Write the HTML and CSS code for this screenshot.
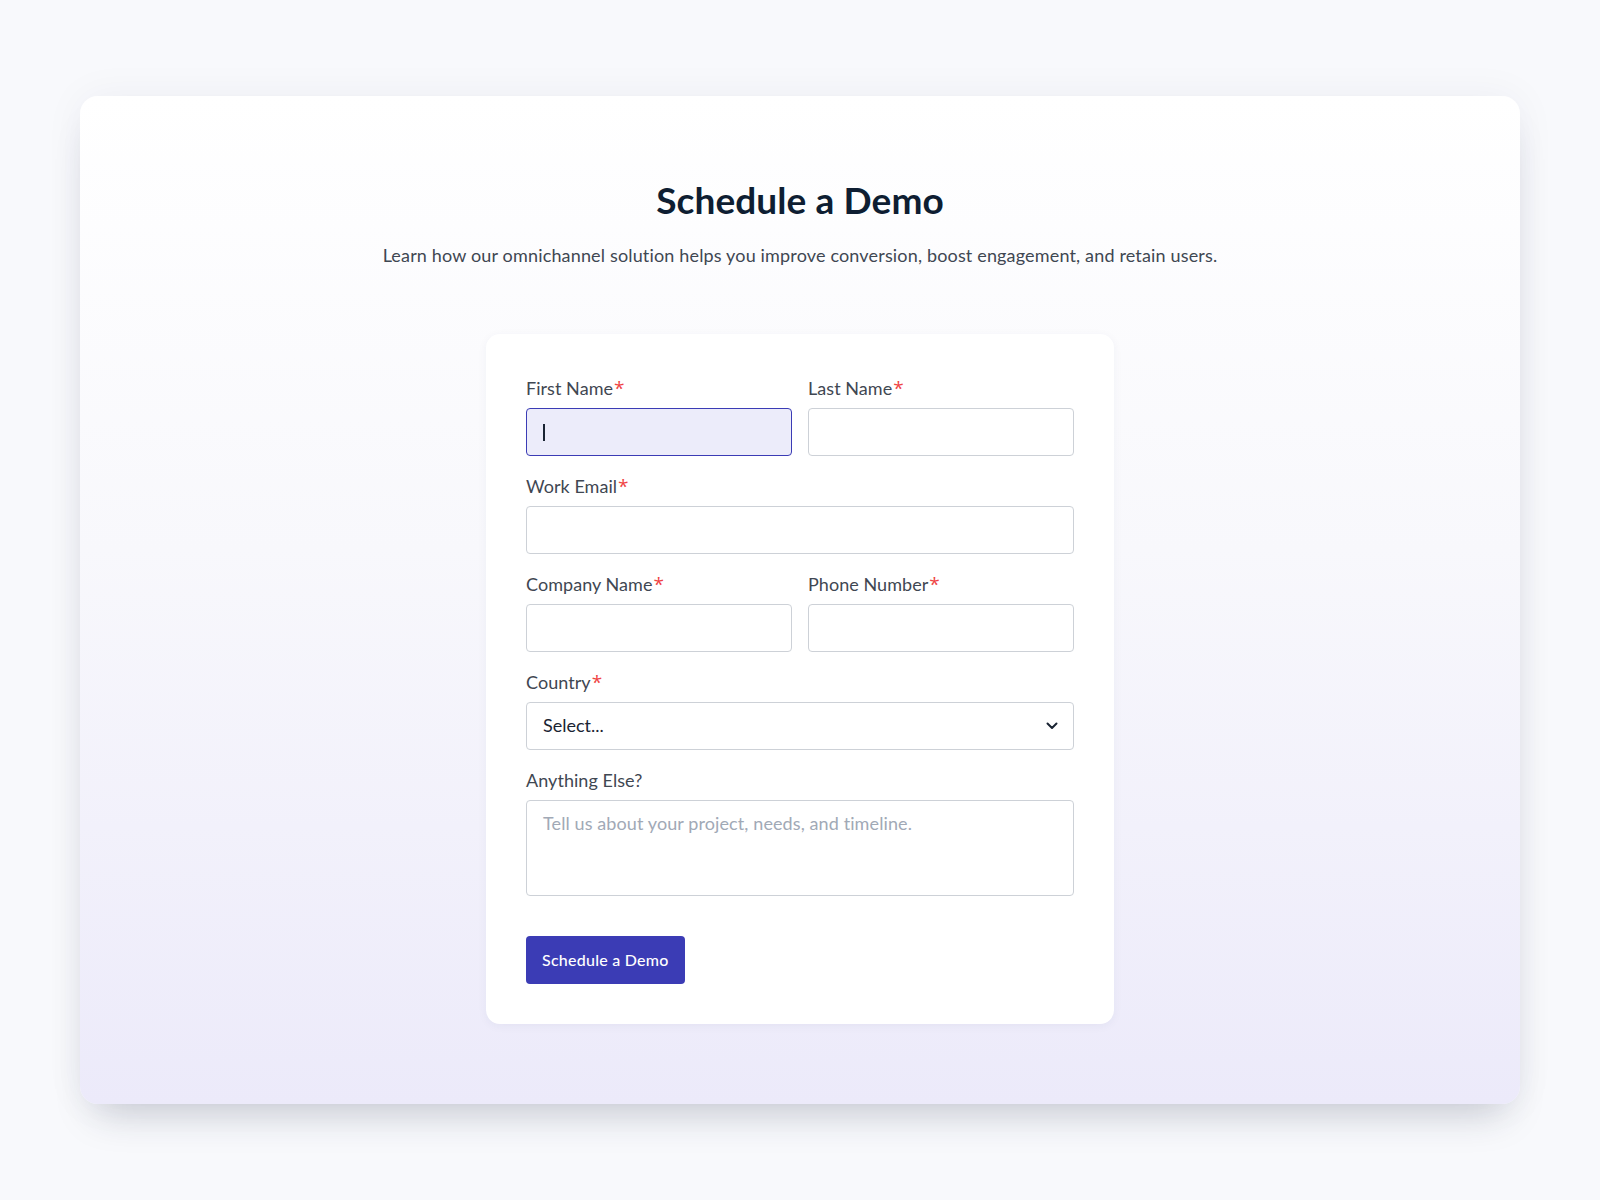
FILE: index.html
```html
<!DOCTYPE html>
<html lang="en">
<head>
<meta charset="utf-8">
<title>Schedule a Demo</title>
<link rel="stylesheet" href="styles.css">
</head>
<body>
<main class="page">
  <section class="hero">
    <h1 class="title">Schedule a Demo</h1>
    <p class="subtitle">Learn how our omnichannel solution helps you improve conversion, boost engagement, and retain users.</p>
    <form class="form-card">
      <div class="row two">
        <div class="field">
          <label class="label">First Name<span class="req">*</span></label>
          <div class="input focused"><span class="caret"></span></div>
        </div>
        <div class="field">
          <label class="label">Last Name<span class="req">*</span></label>
          <div class="input"></div>
        </div>
      </div>
      <div class="row">
        <div class="field">
          <label class="label">Work Email<span class="req">*</span></label>
          <div class="input"></div>
        </div>
      </div>
      <div class="row two">
        <div class="field">
          <label class="label">Company Name<span class="req">*</span></label>
          <div class="input"></div>
        </div>
        <div class="field">
          <label class="label">Phone Number<span class="req">*</span></label>
          <div class="input"></div>
        </div>
      </div>
      <div class="row">
        <div class="field">
          <label class="label">Country<span class="req">*</span></label>
          <div class="input select">
            <span class="select-text">Select...</span>
            <svg class="chevron" width="12" height="8" viewBox="0 0 12 8" fill="none"><path d="M1.5 1.5 6 6l4.5-4.5" stroke="#1a2433" stroke-width="2" stroke-linecap="round" stroke-linejoin="round"/></svg>
          </div>
        </div>
      </div>
      <div class="row">
        <div class="field">
          <label class="label">Anything Else?</label>
          <div class="input textarea"><span class="placeholder">Tell us about your project, needs, and timeline.</span></div>
        </div>
      </div>
      <div class="actions">
        <button type="button" class="btn">Schedule a Demo</button>
      </div>
    </form>
  </section>
</main>
</body>
</html>
```
FILE: styles.css
```css
* { box-sizing: border-box; }
html, body { margin: 0; padding: 0; }
body {
  background: #f8f9fc;
  font-family: "Lato", "Open Sans", sans-serif;
  color: #3f4752;
}
.page {
  padding: 96px 80px 96px;
}
.hero {
  background: linear-gradient(180deg, #ffffff 0%, #f8f8fc 45%, #eceafa 100%);
  border-radius: 18px;
  box-shadow: 0 24px 40px -16px rgba(30, 40, 70, 0.22), 0 0 40px rgba(30, 40, 80, 0.05);
  padding: 80px 0 80px;
  display: flex;
  flex-direction: column;
  align-items: center;
}
.title {
  margin: 0;
  font-size: 37px;
  line-height: 48px;
  font-weight: 700;
  color: #0e1e32;
  letter-spacing: 0.1px;
}
.subtitle {
  margin: 17px 0 0;
  font-size: 18px;
  line-height: 28px;
  color: #3f4752;
  letter-spacing: 0.16px;
}
.form-card {
  margin-top: 65px;
  width: 628px;
  background: #ffffff;
  border-radius: 14px;
  box-shadow: 0 2px 10px rgba(40, 50, 90, 0.05);
  padding: 40px;
  display: flex;
  flex-direction: column;
  gap: 16px;
}
.row { display: flex; gap: 16px; }
.row .field { flex: 1; min-width: 0; }
.field { display: flex; flex-direction: column; gap: 6px; }
.label {
  font-size: 18px;
  line-height: 28px;
  color: #3f4752;
  letter-spacing: 0.05px;
}
.req {
  color: #ef4444;
  font-family: "Open Sans", sans-serif;
  font-size: 19px;
  margin-left: 1px;
}
.input {
  height: 48px;
  border: 1px solid #cdd1d7;
  border-radius: 4px;
  background: #fff;
  display: flex;
  align-items: center;
  padding: 0 16px;
}
.input.focused {
  background: #ececfa;
  border-color: #3b3cb5;
}
.caret {
  display: block;
  width: 2px;
  height: 17px;
  background: #1a2433;
}
.select { justify-content: space-between; padding-right: 15px; }
.select-text { font-size: 18px; color: #1a2433; line-height: 24px; margin-top: -2px; }
.chevron { display: block; }
.textarea {
  height: 96px;
  align-items: flex-start;
  padding-top: 9px;
}
.placeholder { font-size: 18px; line-height: 26px; color: #a1a9b6; letter-spacing: 0.1px; }
.actions { margin-top: 24px; display: flex; }
.btn {
  height: 48px;
  padding: 0 16px 2px;
  border: none;
  border-radius: 4px;
  background: #3b3cb5;
  color: #fff;
  font-family: inherit;
  font-size: 16px;
  font-weight: 500;
  letter-spacing: 0.25px;
  cursor: pointer;
}
```
